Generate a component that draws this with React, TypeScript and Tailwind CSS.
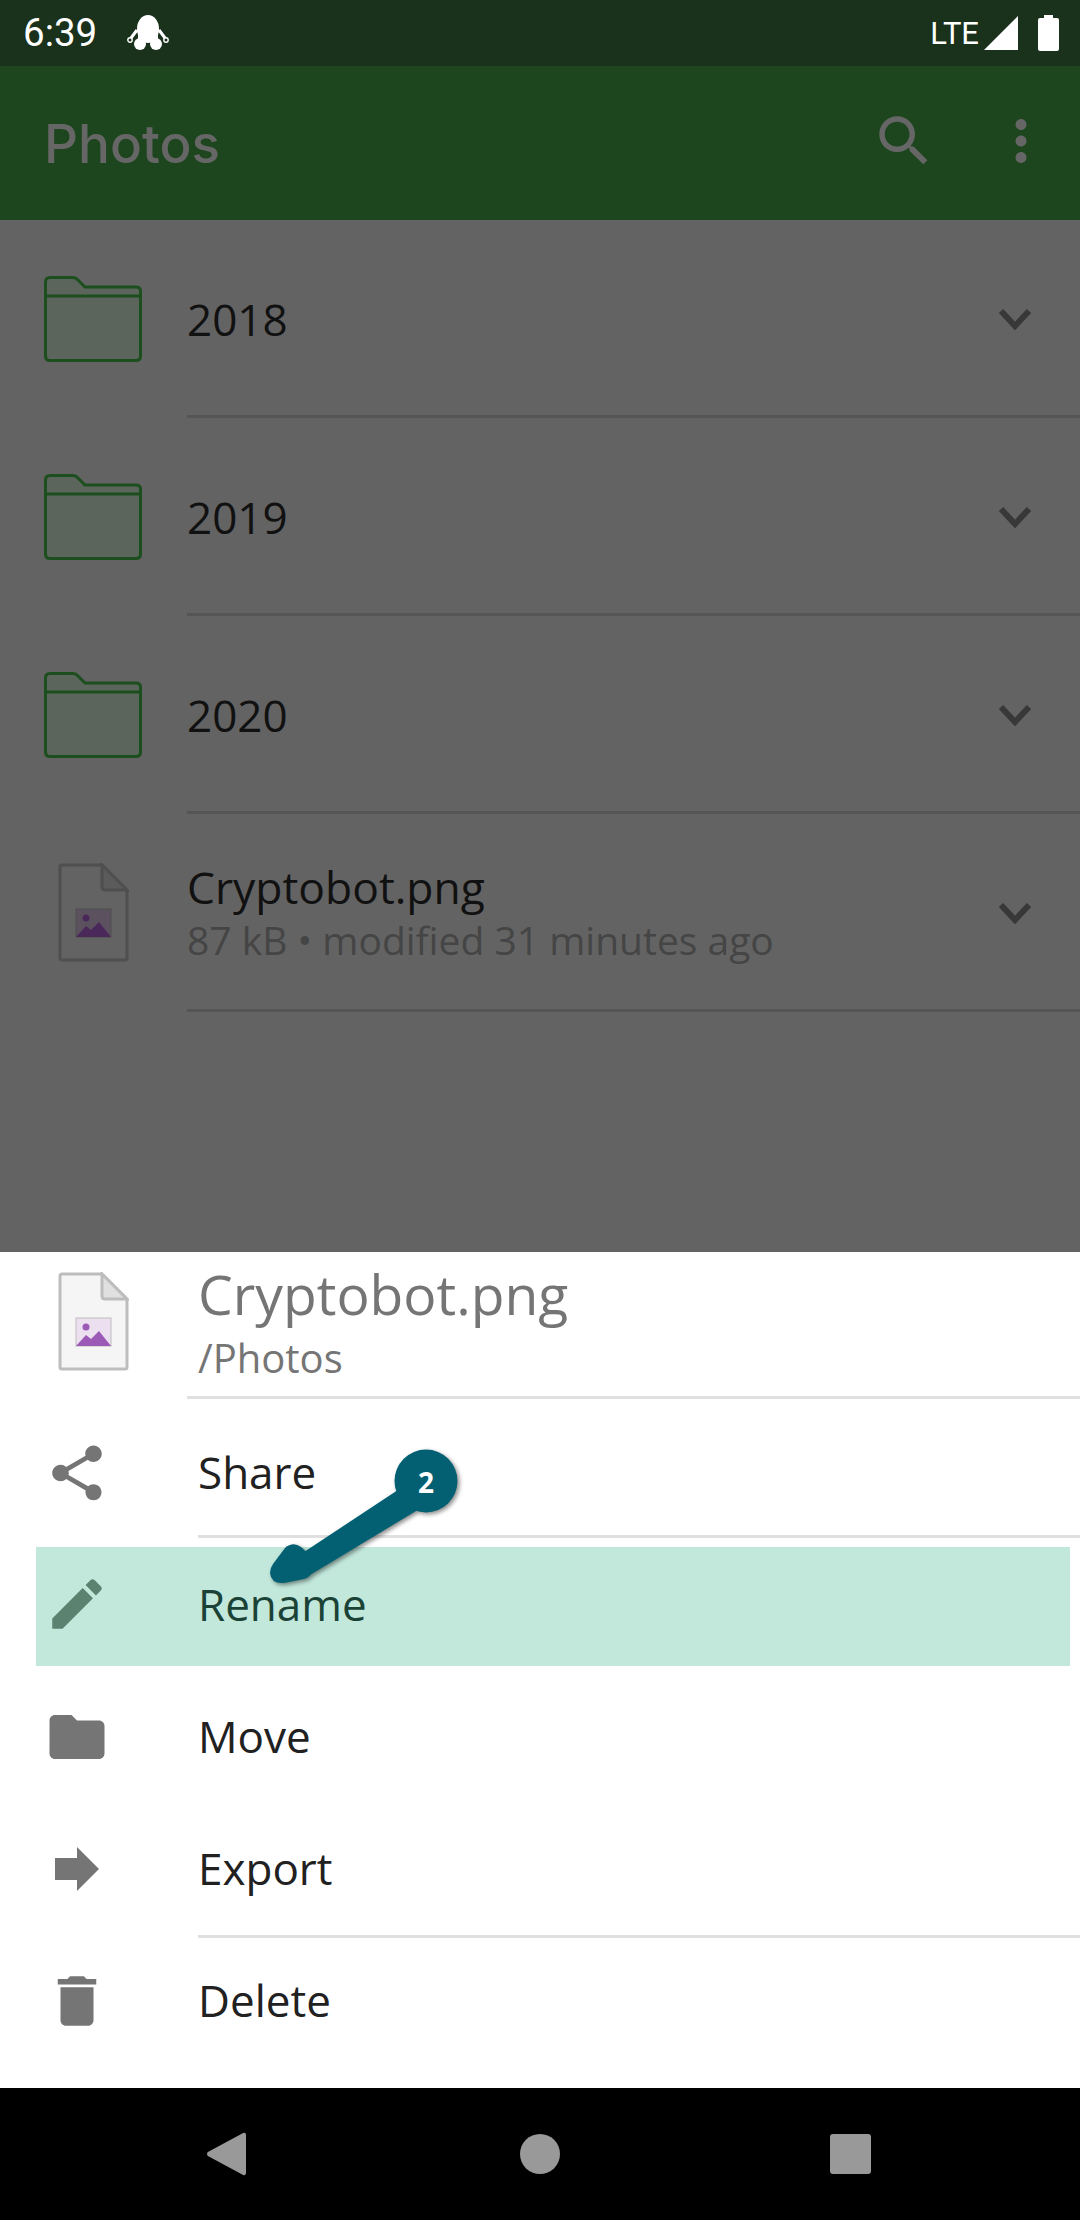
import React from "react";

const SANS = "font-['Open_Sans',sans-serif]";
const ROBOTO = "font-['Roboto',sans-serif]";

const ICONS: Record<string, string> = {
  share:
    "M18 16.08c-.76 0-1.44.3-1.96.77L8.91 12.7c.05-.23.09-.46.09-.7s-.04-.47-.09-.7l7.05-4.11c.54.5 1.25.81 2.04.81 1.66 0 3-1.34 3-3s-1.34-3-3-3-3 1.34-3 3c0 .24.04.47.09.7L8.04 9.81C7.5 9.31 6.79 9 6 9c-1.66 0-3 1.34-3 3s1.34 3 3 3c.79 0 1.5-.31 2.04-.81l7.12 4.16c-.05.21-.08.43-.08.65 0 1.61 1.31 2.92 2.92 2.92 1.61 0 2.92-1.31 2.92-2.92s-1.31-2.92-2.92-2.92z",
  edit: "M3 17.25V21h3.75L17.81 9.94l-3.75-3.75L3 17.25zM20.71 7.04c.39-.39.39-1.02 0-1.41l-2.34-2.34c-.39-.39-1.02-.39-1.41 0l-1.83 1.83 3.75 3.75 1.83-1.83z",
  folder:
    "M10 4H4c-1.1 0-1.99.9-1.99 2L2 18c0 1.1.9 2 2 2h16c1.1 0 2-.9 2-2V8c0-1.1-.9-2-2-2h-8l-2-2z",
  forward: "M12 8V4l8 8-8 8v-4H4V8z",
  trash:
    "M6 19c0 1.1.9 2 2 2h8c1.1 0 2-.9 2-2V7H6v12zM19 4h-3.5l-1-1h-5l-1 1H5v2h14V4z",
  search:
    "M15.5 14h-.79l-.28-.27C15.41 12.59 16 11.11 16 9.5 16 5.91 13.09 3 9.5 3S3 5.91 3 9.5 5.91 16 9.5 16c1.61 0 3.09-.59 4.23-1.57l.27.28v.79l5 4.99L20.49 19l-4.99-5zm-6 0C7.01 14 5 11.99 5 9.5S7.01 5 9.5 5 14 7.01 14 9.5 11.99 14 9.5 14z",
  more: "M12 8c1.1 0 2-.9 2-2s-.9-2-2-2-2 .9-2 2 .9 2 2 2zm0 2c-1.1 0-2 .9-2 2s.9 2 2 2 2-.9 2-2-.9-2-2-2zm0 6c-1.1 0-2 .9-2 2s.9 2 2 2 2-.9 2-2-.9-2-2-2z",
};

const Icon = ({ name, color }: { name: string; color: string }) => (
  <svg viewBox="0 0 24 24" className="w-[66px] h-[66px]" fill={color}>
    <path d={ICONS[name]} />
  </svg>
);

const Chevron = () => (
  <svg viewBox="0 0 34 22" className="w-[34px] h-[22px] mt-[2px]" fill="none">
    <path d="M3 3 L17 18 L31 3" stroke="#383838" strokeWidth="6" />
  </svg>
);

const FolderIcon = () => (
  <svg viewBox="0 0 98 86" className="w-[98px] h-[86px]">
    <path
      d="M6 1.5 H29 Q32 1.5 34 4 L41 11 H92 Q96.5 11 96.5 15 V80 Q96.5 84.5 92 84.5 H6 Q1.5 84.5 1.5 80 V6 Q1.5 1.5 6 1.5 Z"
      fill="#5b655b"
      stroke="#1d4f1e"
      strokeWidth="3"
    />
    <path d="M2 20 H96" stroke="#1d4f1e" strokeWidth="3" />
  </svg>
);

const FileIcon = ({
  page,
  line,
  fold,
  frame,
  hill,
}: {
  page: string;
  line: string;
  fold: string;
  frame: string;
  hill: string;
}) => (
  <svg viewBox="0 0 71 99" className="w-[71px] h-[99px]">
    <path
      d="M4 2 H44 L69 27 V95 Q69 97 67 97 H4 Q2 97 2 95 V4 Q2 2 4 2 Z"
      fill={page}
      stroke={line}
      strokeWidth="3"
    />
    <path d="M44 2 L69 27 H47 Q44 27 44 24 Z" fill={fold} stroke={line} strokeWidth="3" />
    <rect x="18" y="46" width="35" height="28" fill={frame} stroke={line} strokeWidth="1" />
    <circle cx="28" cy="55" r="3.5" fill={hill} />
    <path d="M18 74 L28 63 L33 67 L41 59 L53 74 Z" fill={hill} />
  </svg>
);

const FileRow = ({ name, meta }: { name: string; meta: string }) => (
  <div className="flex h-[198px] items-start">
    <div className="flex w-[187px] h-[198px] items-start justify-center pt-[49px] shrink-0">
      <FileIcon page="#636363" line="#4f4f4f" fold="#5b5b5b" frame="#5c525f" hill="#4a285a" />
    </div>
    <div className="flex h-[198px] flex-1 items-center justify-between border-b-[3px] border-[#555555] pr-[48px]">
      <div className={`${SANS} pt-[1px]`}>
        <div className="text-[44.4px] leading-[56px] text-[#111111]">{name}</div>
        <div className="text-[39px] leading-[50px] text-[#454545]">{meta}</div>
      </div>
      <Chevron />
    </div>
  </div>
);

const FolderRow = ({ name }: { name: string }) => (
  <div className="flex h-[198px] items-start">
    <div className="flex w-[187px] shrink-0 justify-start pl-[44px] pt-[56px]">
      <FolderIcon />
    </div>
    <div className="flex h-[198px] flex-1 items-center justify-between border-b-[3px] border-[#555555] pr-[48px]">
      <div className={`${SANS} pt-[2px] text-[44px] text-[#111111]`}>{name}</div>
      <Chevron />
    </div>
  </div>
);

const SheetRow = ({ icon, label }: { icon: string; label: string }) => (
  <div className="flex h-[132px] items-center">
    <div className="flex w-[154px] justify-center">
      <Icon name={icon} color="#757575" />
    </div>
    <div className={`${SANS} pb-[2px] pl-[44px] text-[44px] text-[#212121]`}>{label}</div>
  </div>
);

export default function App() {
  return (
    <div className="relative flex h-[2220px] w-[1080px] flex-col overflow-hidden bg-[#636363]">
      {/* status bar */}
      <div className="flex h-[66px] shrink-0 items-center justify-between bg-[#1a311b] pl-[23px] pr-[21px] text-white">
        <div className="flex items-center gap-[30px]">
          <span className={`${ROBOTO} text-[38.5px] leading-none`}>6:39</span>
          <svg viewBox="0 0 42 36" className="w-[42px] h-[36px]" fill="#ffffff">
            <ellipse cx="21" cy="14" rx="11" ry="14" />
            <rect x="11" y="12" width="20" height="14" />
            <circle cx="13" cy="29" r="6" />
            <circle cx="29" cy="29" r="6" />
            <path d="M10 15 L4 23 M32 15 L38 23" stroke="#ffffff" strokeWidth="3" />
            <circle cx="3" cy="25" r="2.2" fill="none" stroke="#ffffff" strokeWidth="1.4" />
            <circle cx="39" cy="25" r="2.2" fill="none" stroke="#ffffff" strokeWidth="1.4" />
          </svg>
        </div>
        <div className="flex items-center">
          <span className={`${ROBOTO} text-[31px] leading-none mr-[3px]`}>LTE</span>
          <svg viewBox="0 0 34 34" className="w-[34px] h-[34px] ml-[2px]" fill="#ffffff">
            <path d="M34 0 V34 H0 Z" />
          </svg>
          <svg viewBox="0 0 21 36" className="w-[21px] h-[36px] ml-[20px]" fill="#ffffff">
            <path d="M6 0 H15 V3 H19 Q21 3 21 5 V34 Q21 36 19 36 H2 Q0 36 0 34 V5 Q0 3 2 3 H6 Z" />
          </svg>
        </div>
      </div>

      {/* app bar */}
      <div className="flex h-[154px] shrink-0 items-center justify-between bg-[#1d461e] pl-[44px] pr-[26px]">
        <span className="font-['Inter',sans-serif] pt-[3px] text-[53px] font-medium leading-none text-[#666666]">Photos</span>
        <div className="flex items-center gap-[51px] -mt-[4px]">
          <svg viewBox="0 0 24 24" className="w-[66px] h-[66px]" fill="#666666">
            <path d={ICONS.search} />
          </svg>
          <svg viewBox="0 0 24 24" className="w-[66px] h-[66px]" fill="#666666">
            <path d={ICONS.more} />
          </svg>
        </div>
      </div>

      {/* file list */}
      <div className="flex-1">
        <FolderRow name="2018" />
        <FolderRow name="2019" />
        <FolderRow name="2020" />
        <FileRow name="Cryptobot.png" meta="87 kB • modified 31 minutes ago" />
      </div>

      {/* action sheet */}
      <div className="flex h-[836px] shrink-0 flex-col bg-white">
        <div className="flex h-[147px] shrink-0">
          <div className="flex w-[187px] shrink-0 justify-center pt-[20px]">
            <FileIcon page="#f5f5f5" line="#bdbdbd" fold="#e0e0e0" frame="#ecdff0" hill="#9c59b6" />
          </div>
          <div className={`${SANS} flex-1 border-b-[3px] border-[#e0e0e0] pl-[11px] pt-[7px]`}>
            <div className="text-[55.2px] leading-[70px] text-[#757575]">Cryptobot.png</div>
            <div className="mt-[5px] text-[40px] leading-[48px] text-[#757575]">/Photos</div>
          </div>
        </div>

        <div className="flex h-[136px] items-center pt-[12px]">
          <div className="flex w-[154px] justify-center">
            <Icon name="share" color="#757575" />
          </div>
          <div className={`${SANS} pb-[2px] pl-[44px] text-[44px] text-[#212121]`}>Share</div>
        </div>
        <div className="ml-[198px] h-[3px] bg-[#e0e0e0]" />

        <div className="ml-[36px] mt-[9px] flex h-[119px] w-[1034px] items-center bg-[#c2e8dc] pb-[6px]">
          <div className="flex w-[82px] justify-center">
            <Icon name="edit" color="#5b8270" />
          </div>
          <div className={`${SANS} pl-[80px] text-[44px] text-[#1b4236]`}>Rename</div>
        </div>

        <div className="mt-[5px]">
          <SheetRow icon="folder" label="Move" />
          <SheetRow icon="forward" label="Export" />
        </div>
        <div className="ml-[198px] h-[3px] bg-[#e0e0e0]" />
        <div className="-mt-[3px]">
          <SheetRow icon="trash" label="Delete" />
        </div>
      </div>

      {/* nav bar */}
      <div className="flex h-[132px] shrink-0 items-center bg-black pl-[206px]">
        <svg viewBox="0 0 42 46" className="w-[40px] h-[46px]" fill="#999999">
          <path d="M39 1 Q42 0 42 3 V43 Q42 46 39 45 L2 25 Q0 23 2 21 Z" />
        </svg>
        <div className="ml-[274px] h-[40px] w-[40px] rounded-full bg-[#999999]" />
        <div className="ml-[270px] h-[40px] w-[41px] rounded-[3px] bg-[#999999]" />
      </div>

      {/* annotation arrow */}
      <svg
        viewBox="0 0 210 160"
        className="absolute left-[260px] top-[1440px] w-[210px] h-[160px] drop-shadow-[2px_2px_2px_rgba(0,0,0,0.45)]"
        fill="#026072"
      >
        <circle cx="166" cy="41" r="31.5" />
        <path d="M150 42 L166 65 L50 135 L38 116 Z" />
        <path d="M25 108 Q33 101 41 107 L51 116 Q54 122 53 130 Q51 137 44 139 L24 143 Q11 144 10 133 Q10 128 13 124 Z" />
      </svg>
      <span
        className={`${SANS} absolute left-[418px] top-[1463px] text-[28px] font-bold leading-[38px] text-white`}
      >
        2
      </span>
    </div>
  );
}
